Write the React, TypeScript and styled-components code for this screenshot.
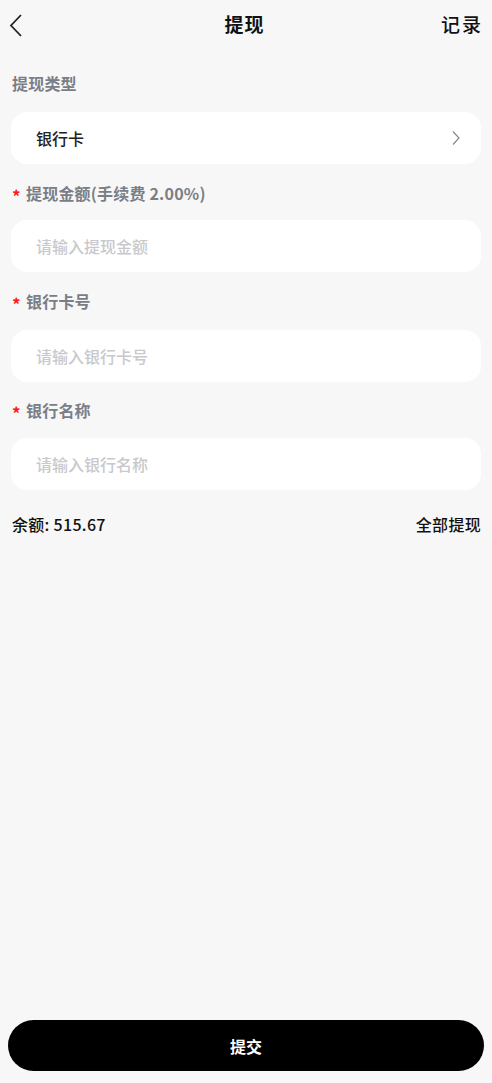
import React, { useState } from "react";
import styled, { createGlobalStyle } from "styled-components";

const GlobalStyle = createGlobalStyle`
  html, body {
    margin: 0;
    padding: 0;
    background: #f7f7f7;
    font-family: "Noto Sans CJK SC", "Noto Sans", sans-serif;
  }
  * {
    box-sizing: border-box;
  }
`;

const Page = styled.div`
  min-height: 1083px;
  display: flex;
  flex-direction: column;
  background: #f7f7f7;
`;

const Header = styled.div`
  height: 46px;
  display: grid;
  grid-template-columns: 60px 1fr 60px;
  align-items: center;
  padding: 0 11px 0 8px;
`;

const BackButton = styled.button`
  background: transparent;
  border: none;
  padding: 0;
  margin-top: 6px;
  width: 24px;
  height: 30px;
  display: flex;
  align-items: center;
  cursor: pointer;
`;

const Title = styled.div`
  text-align: center;
  font-size: 19px;
  font-weight: 700;
  color: #111;
  letter-spacing: 1px;
`;

const HeaderAction = styled.div`
  text-align: right;
  font-size: 19px;
  font-weight: 500;
  color: #111;
  letter-spacing: 2px;
  margin-right: -2px;
`;

const Form = styled.div`
  flex: 1;
  padding: 0 11px;
  display: flex;
  flex-direction: column;
`;

const Label = styled.div<{ $top: number; $bottom: number }>`
  display: flex;
  align-items: center;
  height: 20px;
  margin: ${(p) => p.$top}px 0 ${(p) => p.$bottom}px 1px;
  font-size: 16px;
  font-weight: 700;
  color: #7a7e86;
  letter-spacing: 0.2px;
`;

const Star = styled.span`
  color: #ff1a1a;
  font-size: 17px;
  font-weight: 700;
  width: 14px;
  margin-top: 4px;
`;

const Card = styled.div`
  height: 52px;
  background: #fff;
  border-radius: 16px;
  display: flex;
  align-items: center;
  padding: 0 20px 0 25px;
`;

const CardText = styled.div`
  flex: 1;
  font-size: 16px;
  font-weight: 500;
  color: #222;
`;

const Field = styled.input`
  flex: 1;
  border: none;
  outline: none;
  background: transparent;
  font-family: inherit;
  font-size: 16px;
  font-weight: 500;
  color: #222;
  padding: 0;

  &::placeholder {
    color: #c8c9cc;
  }
`;

const BalanceRow = styled.div`
  margin-top: 22px;
  display: flex;
  justify-content: space-between;
  align-items: center;
  padding: 0 0 0 1px;
  font-size: 16px;
  font-weight: 500;
  color: #111;
  letter-spacing: 0.3px;
`;

const Footer = styled.div`
  padding: 0 8px 12px;
`;

const SubmitButton = styled.button`
  width: 100%;
  height: 51px;
  border: none;
  border-radius: 26px;
  background: #000;
  color: #fff;
  font-family: inherit;
  font-size: 16px;
  font-weight: 700;
  cursor: pointer;
`;

const ChevronLeft = () => (
  <svg width="16" height="26" viewBox="0 0 16 26">
    <path d="M13 2 L3 12.5 L13 23" fill="none" stroke="#222" strokeWidth="1.8" />
  </svg>
);

const ChevronRight = () => (
  <svg width="10" height="16" viewBox="0 0 10 16">
    <path d="M2 1.5 L8 8 L2 14.5" fill="none" stroke="#888" strokeWidth="1.2" />
  </svg>
);

export default function App() {
  const [amount, setAmount] = useState("");
  const [cardNo, setCardNo] = useState("");
  const [bankName, setBankName] = useState("");

  return (
    <Page>
      <GlobalStyle />
      <Header>
        <BackButton>
          <ChevronLeft />
        </BackButton>
        <Title>提现</Title>
        <HeaderAction>记录</HeaderAction>
      </Header>
      <Form>
        <Label $top={27} $bottom={19}>提现类型</Label>
        <Card>
          <CardText>银行卡</CardText>
          <ChevronRight />
        </Card>

        <Label $top={19} $bottom={17}>
          <Star>*</Star>提现金额(手续费 2.00%)
        </Label>
        <Card>
          <Field
            placeholder="请输入提现金额"
            value={amount}
            onChange={(e) => setAmount(e.target.value)}
          />
        </Card>

        <Label $top={19} $bottom={19}>
          <Star>*</Star>银行卡号
        </Label>
        <Card>
          <Field
            placeholder="请输入银行卡号"
            value={cardNo}
            onChange={(e) => setCardNo(e.target.value)}
          />
        </Card>

        <Label $top={18} $bottom={18}>
          <Star>*</Star>银行名称
        </Label>
        <Card>
          <Field
            placeholder="请输入银行名称"
            value={bankName}
            onChange={(e) => setBankName(e.target.value)}
          />
        </Card>

        <BalanceRow>
          <span>余额: 515.67</span>
          <span>全部提现</span>
        </BalanceRow>
      </Form>
      <Footer>
        <SubmitButton>提交</SubmitButton>
      </Footer>
    </Page>
  );
}
